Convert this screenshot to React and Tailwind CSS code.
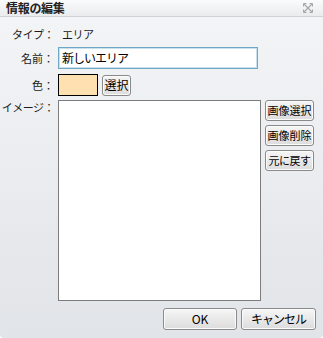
import React from "react";

const font = { fontFamily: '"Noto Sans CJK JP", "Noto Sans", sans-serif' };

function Btn({ children, className = "" }) {
  return (
    <button
      className={
        "flex items-center justify-center whitespace-nowrap rounded-[3px] border border-[#8a8a8a] bg-gradient-to-b from-[#f6f6f6] to-[#dcdcdc] p-0 leading-none text-black shadow-[inset_0_0_0_1px_#fbfbfb] " +
        className
      }
    >
      {children}
    </button>
  );
}

export default function App() {
  return (
    <div
      style={font}
      className="flex h-[338px] w-[323px] flex-col overflow-hidden rounded-b-[4px] bg-gradient-to-b from-[#f4f5f7] to-[#e1e4e8] text-[12px] text-[#1a1a1a]"
    >
      <div className="flex h-[17px] items-center justify-between border-b border-[#d0d3d6] bg-gradient-to-b from-[#fbfbfc] to-[#e9ebed] pl-[6px] pr-[10px]">
        <span className="text-[12px] font-bold leading-none tracking-[-0.3px] text-[#222]">情報の編集</span>
        <svg width="10" height="10" viewBox="0 0 10 10" className="text-[#a8a8a8]">
          <path d="M1 1 L9 9 M9 1 L1 9" stroke="currentColor" strokeWidth="1.2" fill="none" />
          <path d="M0.5 0.5 h3 M0.5 0.5 v3 M9.5 0.5 h-3 M9.5 0.5 v3 M0.5 9.5 h3 M0.5 9.5 v-3 M9.5 9.5 h-3 M9.5 9.5 v-3" stroke="currentColor" strokeWidth="1" fill="none" />
        </svg>
      </div>

      <div className="flex flex-1 flex-col pt-[6px] text-[11px]">
        <div className="flex h-[22px] items-center">
          <span className="w-[56px] whitespace-nowrap pr-[2px] text-right leading-none tracking-[-0.5px]">タイプ：</span>
          <span className="pl-[6px] leading-none tracking-[-0.5px]">エリア</span>
        </div>

        <div className="mt-[2px] flex h-[22px] items-center">
          <span className="w-[58px] whitespace-nowrap pr-[4px] text-right leading-none">名前：</span>
          <div className="flex h-[22px] w-[200px] items-center border border-[#6fa7c4] bg-white pl-[3px] shadow-[inset_0_0_0_1px_#c8e1ee]">
            <span className="text-[12px] leading-none tracking-[-1px] text-black">新しいエリア</span>
          </div>
        </div>

        <div className="mt-[5px] flex h-[22px] items-center">
          <span className="w-[58px] whitespace-nowrap pr-[4px] text-right leading-none">色：</span>
          <div className="h-[22px] w-[40px] border border-black bg-[#ffe0b0]" />
          <Btn className="ml-[4px] h-[21px] w-[29px] text-[12px]">選択</Btn>
        </div>

        <div className="mt-[4px] flex">
          <span className="w-[58px] whitespace-nowrap pr-[4px] pt-[2px] text-right leading-none tracking-[-0.5px]">イメージ：</span>
          <div className="h-[201px] w-[203px] border border-[#7c7c7c] bg-white" />
          <div className="ml-[4px] flex flex-col gap-[4px]">
            <Btn className="h-[21px] w-[49px] text-[11px]">画像選択</Btn>
            <Btn className="h-[21px] w-[49px] text-[11px]">画像削除</Btn>
            <Btn className="h-[21px] w-[49px] text-[11px] tracking-[-0.5px]">元に戻す</Btn>
          </div>
        </div>

        <div className="mt-[7px] flex justify-end gap-[4px] pr-[7px]">
          <Btn className="h-[22px] w-[74px] text-[12px]">OK</Btn>
          <Btn className="h-[22px] w-[75px] text-[12px] tracking-[-1px]">キャンセル</Btn>
        </div>
      </div>
    </div>
  );
}
